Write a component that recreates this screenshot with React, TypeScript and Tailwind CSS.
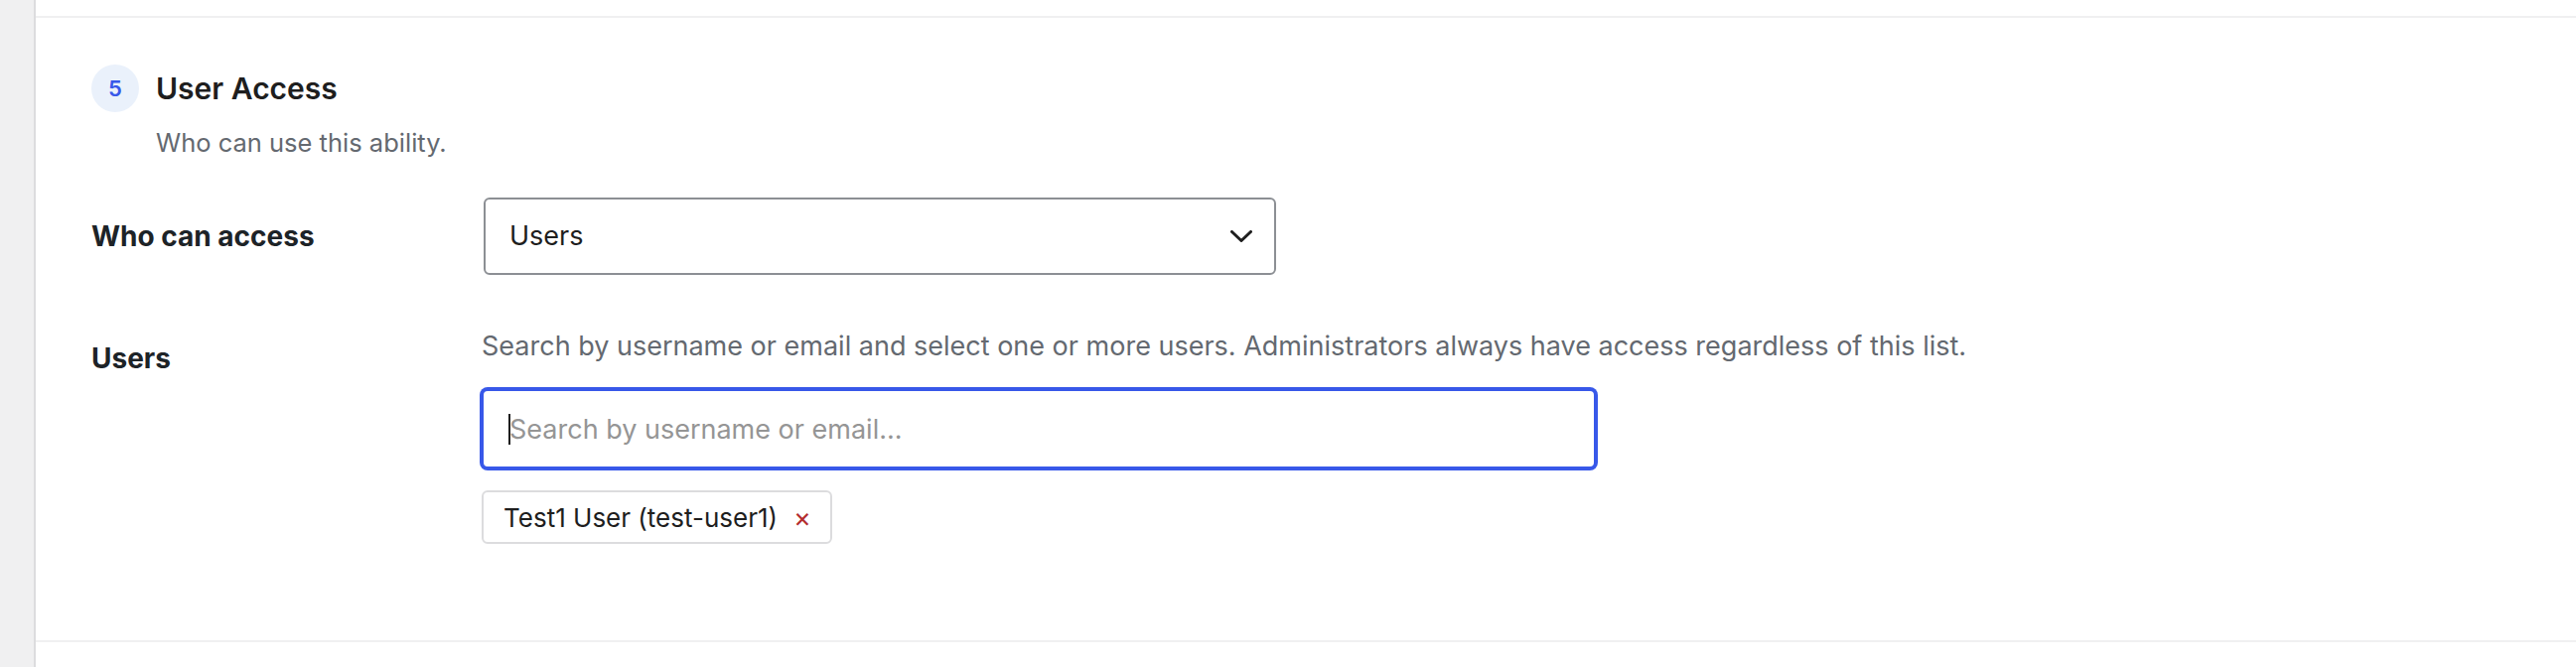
import { useState } from "react";

type PickedUser = { login: string; name: string };

function Chevron() {
  return (
    <svg width="22" height="12" viewBox="0 0 22 12" fill="none" aria-hidden="true">
      <polyline
        points="1.5,1.5 11,10.5 20.5,1.5"
        stroke="#1e1e1e"
        strokeWidth="3"
        strokeLinecap="round"
        strokeLinejoin="round"
      />
    </svg>
  );
}

export default function App() {
  const [access, setAccess] = useState("users");
  const [query, setQuery] = useState("");
  const [picked, setPicked] = useState<PickedUser[]>([
    { login: "test-user1", name: "Test1 User" },
  ]);

  const removeUser = (login: string) => {
    setPicked((list) => list.filter((u) => u.login !== login));
  };

  return (
    <div className="flex min-h-[672px] bg-white font-['Inter','Noto_Sans',sans-serif] text-[#1e1e1e]">
      {/* admin sidebar edge */}
      <div className="w-[36px] shrink-0 bg-[#f0f0f1] border-r-2 border-[#dcdcde]" />

      <main className="flex-1 pt-[16px]">
        <section className="border-y-2 border-[#f0f0f1] pl-[56px] pt-[47px] pb-[97px]">
          {/* step header */}
          <div className="flex gap-[17px]">
            <div className="w-12 h-12 shrink-0 rounded-full bg-[#eaf1fb] flex items-center justify-center text-[22px] font-semibold text-[#3858e9]">
              5
            </div>
            <div>
              <h2 className="text-[30px] leading-[48px] font-semibold text-[#1e1e1e]">User Access</h2>
              <p className="mt-[13px] text-[25.5px] leading-[36px] text-[#646970]">Who can use this ability.</p>
            </div>
          </div>

          {/* who can access */}
          <div className="mt-[37px] flex items-center">
            <label className="w-[393px] shrink-0 text-[28px] leading-[36px] font-bold text-[#1d2327]">
              Who can access
            </label>
            <div className="relative ml-[2px] w-[798px] h-[78px] rounded-[6px] border-2 border-[#8c8f94] bg-white">
              <select
                value={access}
                onChange={(e) => setAccess(e.target.value)}
                className="w-full h-full appearance-none bg-transparent pl-[24px] pr-[60px] text-[27px] text-[#1e1e1e] outline-none"
              >
                <option value="everyone">Everyone</option>
                <option value="roles">Roles</option>
                <option value="users">Users</option>
              </select>
              <span className="pointer-events-none absolute right-[22px] top-1/2 -translate-y-1/2 flex">
                <Chevron />
              </span>
            </div>
          </div>

          {/* users */}
          <div className="mt-[54px] flex items-start">
            <label className="w-[393px] shrink-0 pt-[12px] text-[28px] leading-[36px] font-bold text-[#1d2327]">
              Users
            </label>
            <div className="flex flex-col items-start">
              <p className="text-[27px] leading-[36px] text-[#646970]">
                Search by username or email and select one or more users. Administrators always have access regardless
                of this list.
              </p>

              <div className="relative mt-[25px] w-[1122px] h-[80px] rounded-[6px] border-2 border-[#3858e9] shadow-[0_0_0_2px_#3858e9] bg-white">
                <input
                  value={query}
                  onChange={(e) => setQuery(e.target.value)}
                  placeholder="Search by username or email..."
                  className="w-full h-full bg-transparent pl-[26px] pr-[20px] text-[27px] text-[#1e1e1e] placeholder:text-[#959595] outline-none caret-transparent"
                />
                {/* text caret */}
                <span className="pointer-events-none absolute left-[25px] top-[23px] h-[31px] w-[2px] bg-[#1e1e1e]" />
              </div>

              <div className="mt-[22px] flex gap-3">
                {picked.map((u) => (
                  <span
                    key={u.login}
                    className="inline-flex items-center h-[54px] rounded-[6px] border-2 border-[#dcdcde] bg-white pl-[20px] pr-[19px] text-[26px] text-[#1e1e1e]"
                  >
                    {u.name} ({u.login})
                    <button
                      type="button"
                      onClick={() => removeUser(u.login)}
                      className="ml-[16px] text-[27px] leading-none text-[#b32d2e]"
                    >
                      ×
                    </button>
                  </span>
                ))}
              </div>
            </div>
          </div>
        </section>
      </main>
    </div>
  );
}
